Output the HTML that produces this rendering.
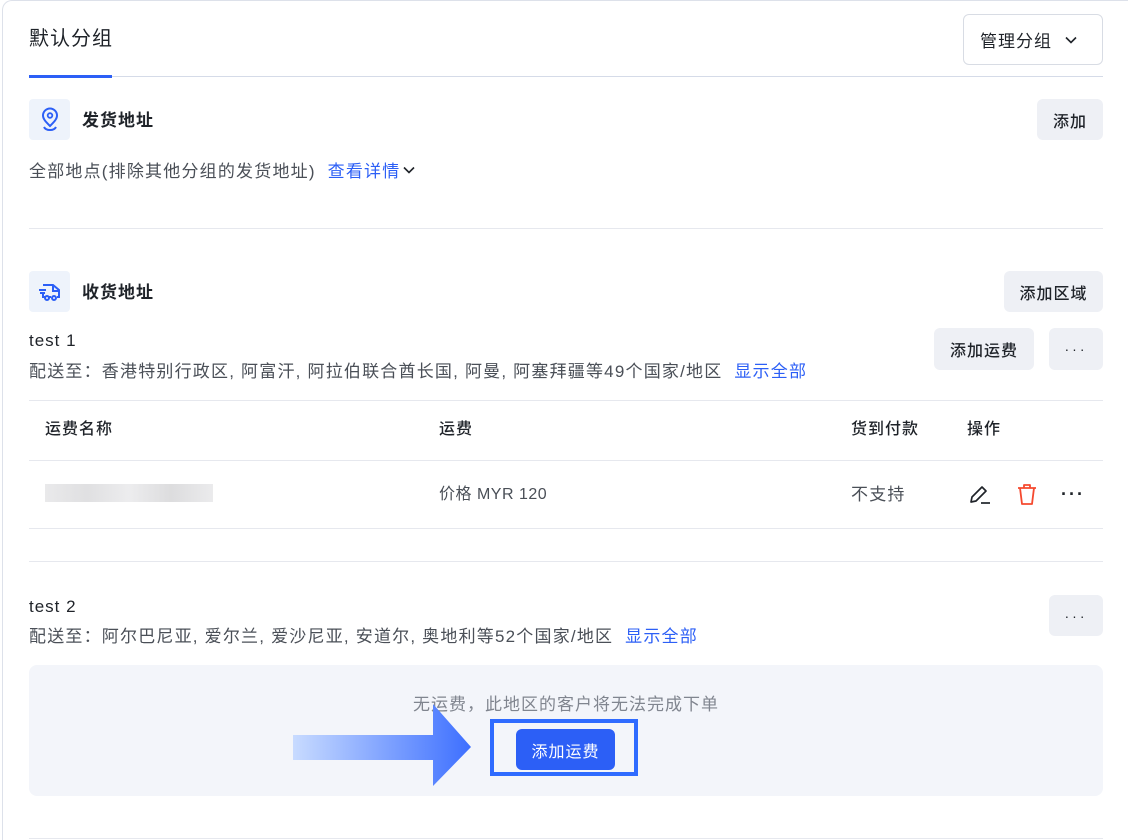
<!DOCTYPE html>
<html><head><meta charset="utf-8"><style>
*{margin:0;padding:0;box-sizing:border-box}
html,body{width:1128px;height:840px;overflow:hidden}
body{background:#fff;font-family:"Liberation Sans","Noto Sans CJK SC",sans-serif;color:#1f2329;position:relative;letter-spacing:1px}
.a{position:absolute;white-space:nowrap}
.card{position:absolute;left:2px;top:0;width:1126px;height:840px;border:1px solid #dde1ea;border-right:none;border-bottom:none;border-radius:10px 0 0 0}
.btn{position:absolute;background:#eef0f5;border-radius:6px;font-size:16px;font-weight:500;display:flex;align-items:center;justify-content:center;color:#1f2329}
.line{position:absolute;left:29px;width:1074px;height:1px;background:#e6e8ee}
.ib{position:absolute;left:29px;width:41px;height:41px;background:#eef3fb;border-radius:4px;display:flex;align-items:center;justify-content:center}
.blue{color:#2c5ff6}
.t15{font-size:17px;color:#4a4f57;letter-spacing:1.2px}
.th{font-size:16px;font-weight:500;line-height:22px}
</style></head><body>
<div class="card"></div>
<div class="a" style="left:29px;top:27px;font-size:20px;line-height:24px">默认分组</div>
<div class="a" style="left:29px;top:76px;width:1074px;height:1px;background:#d5dbe8"></div>
<div class="a" style="left:29px;top:75px;width:83px;height:3px;background:#2c5ff6"></div>
<div class="a" style="left:963px;top:14px;width:140px;height:51px;border:1px solid #d8dce4;border-radius:6px;font-size:17px;display:flex;align-items:center;padding-left:16px">管理分组<svg style="margin-left:12px" width="14" height="14" viewBox="0 0 14 14"><path d="M2 4.5l5 5 5-5" fill="none" stroke="#1f2329" stroke-width="1.6"/></svg></div>

<div class="ib" style="top:99px"><svg width="22" height="26" viewBox="0 0 22 26"><path d="M11 19C7 15 4 12 4 8.5a7 7 0 0114 0C18 12 15 15 11 19z" fill="none" stroke="#2c5ff6" stroke-width="2"/><circle cx="11" cy="8.5" r="2.3" fill="none" stroke="#2c5ff6" stroke-width="1.8"/><path d="M5 20c1 2 3 3 6 3s5-1 6-3" fill="none" stroke="#2c5ff6" stroke-width="2"/></svg></div>
<div class="a" style="left:82px;top:110px;font-size:17px;font-weight:700;line-height:22px">发货地址</div>
<div class="btn" style="left:1037px;top:99px;width:66px;height:41px">添加</div>
<div class="a t15" style="left:29px;top:161px;line-height:22px">全部地点(排除其他分组的发货地址) <span class="blue" style="margin-left:6px">查看详情</span><svg style="margin-left:2px" width="14" height="14" viewBox="0 0 14 14"><path d="M2 4.5l5 5 5-5" fill="none" stroke="#1f2329" stroke-width="1.6"/></svg></div>
<div class="line" style="top:228px"></div>

<div class="ib" style="top:271px"><svg width="26" height="22" viewBox="0 0 26 22"><path d="M6 4h10l6 5v7h-2M8 16H6V12" fill="none" stroke="#2c5ff6" stroke-width="2"/><path d="M14 16h-2M16 4v6h6" fill="none" stroke="#2c5ff6" stroke-width="2"/><path d="M2 9h7M3 12h5" stroke="#2c5ff6" stroke-width="2"/><circle cx="10" cy="17" r="2" fill="none" stroke="#2c5ff6" stroke-width="2"/><circle cx="17" cy="17" r="2" fill="none" stroke="#2c5ff6" stroke-width="2"/></svg></div>
<div class="a" style="left:82px;top:282px;font-size:17px;font-weight:700;line-height:22px">收货地址</div>
<div class="btn" style="left:1004px;top:271px;width:99px;height:41px">添加区域</div>

<div class="a" style="left:29px;top:330px;font-size:17px;line-height:22px">test 1</div>
<div class="a t15" style="left:29px;top:361px;line-height:22px">配送至：香港特别行政区, 阿富汗, 阿拉伯联合酋长国, 阿曼, 阿塞拜疆等49个国家/地区 <span class="blue" style="margin-left:6px">显示全部</span></div>
<div class="btn" style="left:934px;top:328px;width:100px;height:42px">添加运费</div>
<div class="btn" style="left:1049px;top:328px;width:54px;height:42px;letter-spacing:3px;font-size:14px">···</div>

<div class="line" style="top:400px"></div>
<div class="a th" style="left:45px;top:419px">运费名称</div>
<div class="a th" style="left:439px;top:419px">运费</div>
<div class="a th" style="left:851px;top:419px">货到付款</div>
<div class="a th" style="left:967px;top:419px">操作</div>
<div class="line" style="top:460px"></div>
<div class="a" style="left:45px;top:484px;width:168px;height:18px;background:linear-gradient(90deg,#e4e4e6,#d8d8da,#e8e8ea,#d4d4d6,#e6e6e8);opacity:.8"></div>
<div class="a" style="left:439px;top:484px;line-height:22px;font-size:16px;color:#4a4f57;letter-spacing:0.5px">价格 MYR 120</div>
<div class="a t15" style="left:851px;top:484px;line-height:22px">不支持</div>
<svg class="a" style="left:968px;top:482px" width="24" height="24" viewBox="0 0 24 24"><path d="M3 20l1-5L14 5l4 4L8 19z" fill="none" stroke="#1f2329" stroke-width="1.7" stroke-linejoin="round"/><path d="M13 21h9" stroke="#1f2329" stroke-width="1.7"/></svg>
<svg class="a" style="left:1015px;top:482px" width="24" height="24" viewBox="0 0 24 24"><path d="M3 6h18M9 6V3h6v3M5 6l2 16h10l2-16" fill="none" stroke="#f5492f" stroke-width="1.8" stroke-linejoin="round"/></svg>
<div class="a" style="left:1061px;top:484px;font-size:18px;letter-spacing:2px;line-height:20px;font-weight:700">···</div>
<div class="line" style="top:528px"></div>
<div class="line" style="top:561px"></div>

<div class="a" style="left:29px;top:596px;font-size:17px;line-height:22px">test 2</div>
<div class="a t15" style="left:29px;top:626px;line-height:22px">配送至：阿尔巴尼亚, 爱尔兰, 爱沙尼亚, 安道尔, 奥地利等52个国家/地区 <span class="blue" style="margin-left:6px">显示全部</span></div>
<div class="btn" style="left:1049px;top:595px;width:54px;height:41px;letter-spacing:3px;font-size:14px">···</div>

<div class="a" style="left:29px;top:665px;width:1074px;height:131px;background:#f3f5fa;border-radius:8px"></div>
<div class="a" style="left:0;width:1128px;top:694px;text-align:center;font-size:17px;color:#80858f;line-height:22px;padding-left:4px">无运费，此地区的客户将无法完成下单</div>
<div class="a" style="left:490px;top:719px;width:148px;height:57px;border:4px solid #2f6bff"></div>
<div class="a" style="left:516px;top:729px;width:99px;height:41px;background:#2c5ff6;border-radius:6px;color:#fff;font-size:16px;display:flex;align-items:center;justify-content:center">添加运费</div>
<svg class="a" style="left:293px;top:700px" width="180" height="88" viewBox="0 0 180 88"><defs><linearGradient id="g" x1="0" x2="1"><stop offset="0" stop-color="#c8dbff"/><stop offset="1" stop-color="#3d6fff"/></linearGradient></defs><path d="M0 35h140V4l38 43-38 39V60H0z" fill="url(#g)"/></svg>
<div class="line" style="top:838px"></div>
</body></html>
